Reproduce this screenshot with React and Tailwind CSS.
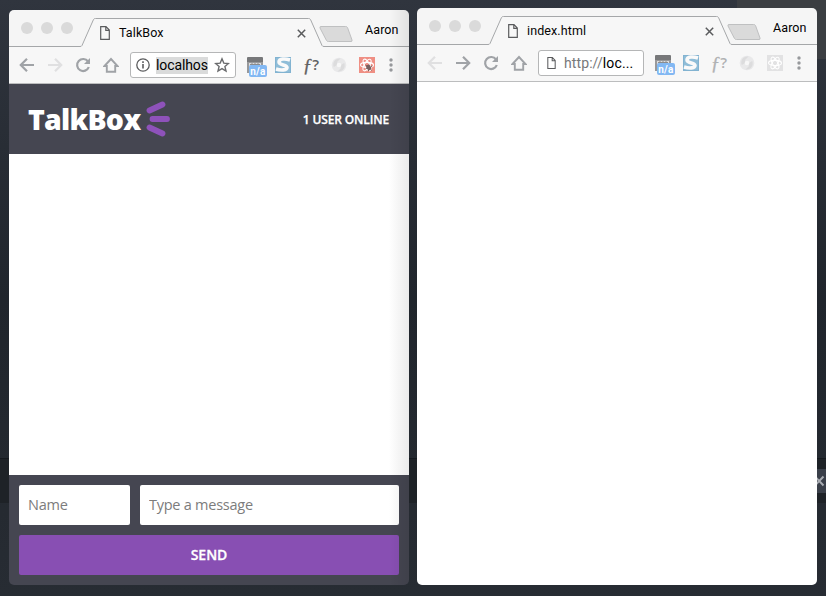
import React from "react";

const stroke = { fill: "none", stroke: "currentColor", strokeWidth: 2.2 };

function PageIcon({ className }) {
  return (
    <svg className={className} viewBox="0 0 10 14">
      <path d="M.7.7H6L9.3 4v9.3H.7ZM5.8.7V4.3H9.3" fill="none" stroke="#5a5b5d" strokeWidth="1.2" />
    </svg>
  );
}

function TabStrip({ title }) {
  return (
    <div className="relative h-[37px] w-full shrink-0 bg-[#f5f5f5]">
      <svg className="absolute inset-0" width="400" height="37">
        <path d="M72 36.5 84.5 9.5Q85 8.5 86 8.5H299Q300 8.5 300.5 9.5L313 35.5Q313.500 36.500 315 36.500V37H72Z" fill="#f7f7f7" />
        <path
          d="M0 36.500H71Q72.500 36.500 73 35.500L84.500 9.500Q85 8.500 86.500 8.500H299.500Q301 8.500 301.500 9.500L313 35.500Q313.500 36.500 315 36.500H400"
          fill="none"
          stroke="#a5a7a9"
        />
        <path
          d="M312 16.500H336.500Q338 16.500 338.500 17.500L343 30Q343.500 31.500 342 31.500H319.500Q318 31.500 317.500 30.500L311 18Q310.500 16.500 312 16.500Z"
          fill="#dadada"
          stroke="#bfc0c1"
        />
      </svg>
      <div className="relative flex h-full items-center">
        <div className="mb-px flex w-[91px] gap-2 pl-3">
          <span className="h-3 w-3 rounded-full bg-[#dadada]" />
          <span className="h-3 w-3 rounded-full bg-[#dadada]" />
          <span className="h-3 w-3 rounded-full bg-[#dadada]" />
        </div>
        <PageIcon className="mt-2 h-[14px] w-[10px]" />
        <span className="ml-[9px] mt-2 w-[178px] text-[12.5px] leading-4 tracking-[.1px] text-[#050505]">{title}</span>
        <svg className="mt-[9px] h-[9px] w-[9px]" viewBox="0 0 9 9">
          <path d="m.8.8 7.400 7.400m0-7.400L.8 8.200" fill="none" stroke="#5a5b5d" strokeWidth="1.500" />
        </svg>
        <span className="mb-px ml-[59px] mt-1 text-[12.5px] leading-4 tracking-[.1px] text-black">Aaron</span>
      </div>
    </div>
  );
}

function Cell({ children, dim }) {
  return (
    <span className={"flex h-7 w-7 shrink-0 items-center justify-center " + (dim ? "text-[#e0e0e1]" : "text-[#a0a3a7]")}>
      {children}
    </span>
  );
}

function Toolbar({ children, canGoBack, active }) {
  return (
    <div className="flex h-[37px] shrink-0 items-center border-b border-[#bcbdbe] bg-[#f7f7f7] pl-1">
      <Cell dim={!canGoBack}>
        <svg width="16" height="16" viewBox="0 0 16 16"><path d="M15 8H2.500M8 1.800 1.800 8 8 14.200" {...stroke} /></svg>
      </Cell>
      <Cell dim={canGoBack}>
        <svg width="16" height="16" viewBox="0 0 16 16"><path d="M1 8h12.500M8 1.800 14.200 8 8 14.200" {...stroke} /></svg>
      </Cell>
      <Cell>
        <svg width="16" height="16" viewBox="0 0 16 16">
          <path d="M13 4.500A6 6 0 1 0 13.800 10" {...stroke} />
          <path d="M15 1v6H9Z" fill="currentColor" />
        </svg>
      </Cell>
      <Cell>
        <svg width="16" height="16" viewBox="0 0 16 16"><path d="M1.500 9 8 2l6.500 7H12.200V14.700H3.800V9Z" {...stroke} strokeWidth="1.900" /></svg>
      </Cell>
      <div className="ml-[5px] mr-[5px] flex h-[26px] w-[106px] shrink-0 items-center overflow-hidden rounded-[3px] border border-[#b5b6b7] bg-white text-[14px] leading-[17px]">
        {children}
      </div>
      <Cell>
        <span className="relative h-[16px] w-[16px]">
          <svg width="16" height="16" viewBox="0 0 16 16">
            <path d="M0 1Q0 0 1 0H15Q16 0 16 1V16H0Z" fill="#77787a" />
            <path d="M0 5H16V16H0Z" fill="#98999b" />
            <path d="M2 6h12v9H2Z" fill="#dedede" />
            <path d="M3 7.500h10M5 6v4m3-4v4m3-4v4" stroke="#8b8c8e" fill="none" />
          </svg>
          <span className="absolute left-[2px] top-2 h-3 w-[18px] rounded-[2px] bg-[#82b8f3] text-center text-[10px] font-bold leading-[13px] tracking-[.3px] text-white">
            n/a
          </span>
        </span>
      </Cell>
      <Cell>
        <svg width="16" height="16" viewBox="0 0 16 16">
          <path d="M0 0h16v16H0Z" fill="#82b3d1" />
          <path d="M1 1h14v14H1Z" fill="#8fbdd8" />
          <path d="M15 3C10 1.300 4 1.500 4 5c0 3.500 8 2.500 8 5.500 0 2.700-5.500 3.200-11 1.500" fill="none" stroke="#fafafa" strokeWidth="3.600" />
        </svg>
      </Cell>
      <Cell>
        <span className={"flex items-center leading-none " + (active ? "text-[#5f6062]" : "text-[#b0b1b3]")}>
          <span className="font-['Liberation_Serif',serif] text-[19px] italic [-webkit-text-stroke:.3px_currentColor]">ƒ</span>
          <span className="-mt-0.5 font-['Open_Sans',sans-serif] text-[15px] font-semibold">?</span>
        </span>
      </Cell>
      <Cell dim>
        <svg width="16" height="16" viewBox="0 0 16 16">
          <circle cx="8" cy="8" r="7.300" fill="#e9e9ea" />
          <path d="M9.500 1.500C4 1 1 5.500 2.800 10L7 7.500 6 5ZM6.500 14.500c5.500.5 8.500-4 6.700-8.500L9 8.500 10 11Z" fill="#dcdcdd" />
          <circle cx="8" cy="8" r="2.300" fill="#f7f7f7" />
        </svg>
      </Cell>
      <Cell dim>
        <svg width="16" height="16" viewBox="0 0 16 16">
          <path d="M0 0h16v16H0Z" fill={active ? "#ef8f84" : "#e2e2e3"} />
          <g fill="none" stroke="#fff" strokeWidth="1.100">
            <ellipse cx="8" cy="8" rx="6.500" ry="2.600" />
            <ellipse cx="8" cy="8" rx="6.500" ry="2.600" transform="rotate(60 8 8)" />
            <ellipse cx="8" cy="8" rx="6.500" ry="2.600" transform="rotate(120 8 8)" />
          </g>
          {active && (
            <g>
              <ellipse cx="9.700" cy="10.400" rx="2.200" ry="2.800" transform="rotate(-35 9.700 10.400)" fill="#77605f" />
              <path d="m6.500 8 1.600 1.200M6.800 11.500l1.700-.5M10 7.500l.3 1.200M11.500 12.500l1.200.8M12 9.500l1.300-.5M9.500 13v1.200" stroke="#77605f" strokeWidth="1" />
            </g>
          )}
        </svg>
      </Cell>
      <svg className="ml-2" width="4" height="14" viewBox="0 0 4 14" fill="#97999c">
        <circle cx="2" cy="2" r="1.700" /><circle cx="2" cy="7" r="1.700" /><circle cx="2" cy="12" r="1.700" />
      </svg>
    </div>
  );
}

function Logo() {
  return (
    <div className="flex items-center">
      <span className="-ml-px w-[113px] whitespace-nowrap pb-px text-[28.5px] font-extrabold leading-10 tracking-[-.8px] text-white">TalkBox</span>
      <svg className="ml-1 h-9 w-[26px]" viewBox="0 0 26 36">
        <path d="M4.500 9.500 17.500 3.500M7.500 18h14.500M4.500 26.500 17.500 32.500" fill="none" stroke="#8e52ba" strokeWidth="5.800" strokeLinecap="round" />
      </svg>
    </div>
  );
}

export default function App() {
  return (
    <div className="relative flex h-[596px] w-[826px] items-start gap-2 overflow-hidden bg-gradient-to-b from-[#30353e] via-[#20252c] to-[#272c33] pl-[9px] font-[Roboto,sans-serif]">
      <div className="absolute right-0 top-0 h-[59px] w-[89px] bg-[#3b3e42]" />
      <div className="absolute left-0 top-[458px] h-[45px] w-[826px] border-t border-[#15191e] bg-[#1e2227]" />
      <div className="absolute right-0 top-[469px] flex h-6 w-[9px] items-center bg-[#3a3f49]">
        <svg width="9" height="12" viewBox="0 0 9 12"><path d="M-2 1.500 6.500 10.500M6.500 1.500-2 10.500" fill="none" stroke="#a9acb2" strokeWidth="2" /></svg>
      </div>

      <section className="relative mt-[10px] flex h-[575px] w-[400px] shrink-0 flex-col overflow-hidden rounded-[5px]">
        <TabStrip title="TalkBox" />
        <Toolbar canGoBack active>
          <svg className="ml-[5px] shrink-0" width="14" height="14" viewBox="0 0 14 14">
            <circle cx="7" cy="7" r="6.200" fill="none" stroke="#5a5b5d" strokeWidth="1.300" />
            <path d="M7 6v4.500M7 3.200v1.700" stroke="#5a5b5d" strokeWidth="1.600" />
          </svg>
          <span className="ml-[6px] shrink-0 whitespace-nowrap bg-[#dadbdb] tracking-[-.1px] text-black">localhos</span>
          <svg className="ml-auto mr-[5px] shrink-0" width="16" height="16" viewBox="0 0 16 16">
            <path d="m8 1.800 1.800 4.300 4.600.4-3.500 3 1.100 4.600L8 11.600l-4 2.500 1.100-4.600-3.500-3 4.600-.4Z" fill="none" stroke="#6b6c6e" strokeWidth="1.400" />
          </svg>
        </Toolbar>
        <div className="flex min-h-0 flex-1 flex-col font-['Open_Sans',sans-serif]">
          <header className="flex h-[70px] shrink-0 items-center justify-between bg-[#454651] px-5">
            <Logo />
            <span className="pt-0.5 text-[12px] font-semibold tracking-[-.15px] text-white [-webkit-text-stroke:.25px_white]">1 USER ONLINE</span>
          </header>
          <main className="flex-1 bg-white" />
          <form className="flex h-[110px] shrink-0 flex-col gap-[10px] bg-[#454651] p-[10px]">
            <div className="flex gap-[10px]">
              <input className="h-10 w-[111px] rounded-[2px] bg-white px-[9px] pb-0.5 text-[14.5px] tracking-[-.25px] placeholder:text-[#7c7c7c]" placeholder="Name" />
              <input className="h-10 min-w-0 flex-1 rounded-[2px] bg-white px-[9px] pb-0.5 text-[14.5px] tracking-[-.25px] placeholder:text-[#7c7c7c]" placeholder="Type a message" />
            </div>
            <button type="button" className="h-10 rounded-[2px] bg-[#884fb3] pb-0.5 text-[14px] font-semibold text-white [-webkit-text-stroke:.3px_white]">SEND</button>
          </form>
        </div>
        <div className="pointer-events-none absolute inset-y-0 right-0 w-5 bg-gradient-to-r from-black/0 to-black/8" />
      </section>

      <section className="relative mt-2 flex h-[577px] w-[400px] shrink-0 flex-col overflow-hidden rounded-[5px]">
        <TabStrip title="index.html" />
        <Toolbar>
          <PageIcon className="ml-2 h-3 w-[9px] shrink-0" />
          <span className="ml-2 whitespace-nowrap tracking-[.1px] text-black"><span className="text-[#77787a]">http://</span>loc...</span>
        </Toolbar>
        <main className="flex-1 bg-white" />
      </section>
    </div>
  );
}
